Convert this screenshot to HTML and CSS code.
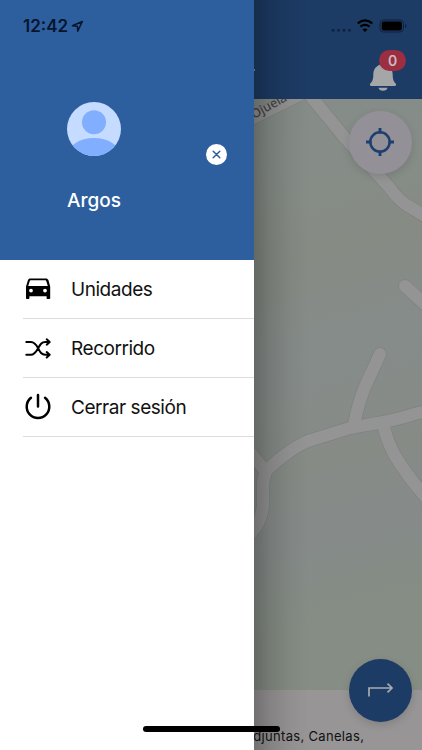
FILE: index.html
```html
<!DOCTYPE html>
<html lang="es">
<head>
<meta charset="utf-8">
<meta name="viewport" content="width=device-width, initial-scale=1">
<title>Argos</title>
<link rel="stylesheet" href="styles.css">
</head>
<body>
<div class="phone">
  <main class="app">
    <header class="topbar">
      <span class="title-end"></span>
      <div class="bell">
        <svg width="28" height="30" viewBox="0 0 28 30"><path d="M14 1.5c-1.5 0-2.3.8-2.3 2C7 4.8 4.300 8.500 4.300 13.500c0 6-1.500 7.500-3 9-.8.900-.4 2.500 1 2.500h23.400c1.400 0 1.800-1.600 1-2.500-1.500-1.500-3-3-3-9 0-5-2.700-8.700-7.400-10 0-1.200-.8-2-2.300-2zM9.500 26.700c.3 1.800 2 3 4.500 3s4.200-1.200 4.500-3z" fill="#a5a6a8"/></svg>
        <span class="badge">0</span>
      </div>
    </header>
    <section class="map">
      <svg class="roads" viewBox="254 99 168 591">
        <g class="road-edge">
          <path d="M245 122L301 94"/>
          <path d="M309 94L345 138L389 187Q400 202 410 207L430 219"/>
          <path d="M405 286L430 309"/>
          <path d="M380 354L369 378Q359 398 354 425"/>
          <path d="M430 411L418 413Q399 419 383 422L350 428L308 441Q289 449 266 471Q259 464 251 453M266 471Q263 479 263 486V506Q261 524 249 535"/>
          <path d="M383 423Q386 438 394 454Q406 475 430 502"/>
        </g>
        <g class="road">
          <path d="M245 122L301 94"/>
          <path d="M309 94L345 138L389 187Q400 202 410 207L430 219"/>
          <path d="M405 286L430 309"/>
          <path d="M380 354L369 378Q359 398 354 425"/>
          <path d="M430 411L418 413Q399 419 383 422L350 428L308 441Q289 449 266 471Q259 464 251 453M266 471Q263 479 263 486V506Q261 524 249 535"/>
          <path d="M383 423Q386 438 394 454Q406 475 430 502"/>
        </g>
        <text class="street" transform="translate(254 119) rotate(-29)">Ojuela</text>
      </svg>
      <button class="fab locate" aria-label="Ubicación">
        <svg width="30" height="30" viewBox="0 0 30 30" fill="none" stroke="#1d3f70"><circle cx="15" cy="15" r="9.700" stroke-width="2.500"/><path d="M15 1v5.500M15 23.500V29M1 15h5.500M23.500 15H29" stroke-width="2.900"/></svg>
      </button>
      <button class="fab route" aria-label="Ruta">
        <svg width="28" height="16" viewBox="0 0 28 16" fill="none" stroke="#a8acb2" stroke-width="1.700"><path d="M3 14.500V6h22.500M21.500 1.700L26 6l-4.500 4.300"/></svg>
      </button>
    </section>
    <footer class="address">Adjuntas, Canelas,</footer>
  </main>
  <div class="shade"></div>
  <aside class="drawer">
    <div class="profile">
      <svg class="avatar" width="54" height="54" viewBox="0 0 54 54"><defs><clipPath id="round"><circle cx="27" cy="27" r="27"/></clipPath></defs><g clip-path="url(#round)"><path fill="#c5dbff" d="M0 0h54v54H0z"/><circle cx="27" cy="20.300" r="12" fill="#82aeff"/><ellipse cx="27" cy="53" rx="26" ry="17" fill="#82aeff"/></g></svg>
      <h1>Argos</h1>
      <button class="close" aria-label="Cerrar"><svg width="21" height="21" viewBox="0 0 21 21"><path d="M7.200 7.200l6.600 6.600M13.800 7.200l-6.600 6.600" stroke="#2d5f9f" stroke-width="1.500" stroke-linecap="round"/></svg></button>
    </div>
    <nav>
      <a class="item"><svg width="30" height="30" viewBox="0 -0.5 30 30"><path fill-rule="evenodd" d="M7.200 4h15.600c1.300 0 2.100.5 2.600 1.600L27.200 12v11.400c0 .8-.4 1.100-1.100 1.100h-1.400c-.8 0-1.100-.4-1.100-1.100v-1.700H6.400v1.700c0 .7-.4 1.100-1.100 1.100H4.100c-.7 0-1.100-.3-1.100-1.100V12l2-6.400C5.500 4.500 6 4 7.200 4zm.8 1.800c-.7 0-1.100.2-1.300.9L5.200 11.500h19.600l-1.500-4.800c-.2-.7-.6-.9-1.300-.9zM8 14.200a1.900 1.900 0 1 0 0 3.800 1.900 1.900 0 0 0 0-3.800zm14 0a1.900 1.900 0 1 0 0 3.800 1.900 1.900 0 0 0 0-3.800z"/></svg><span>Unidades</span></a>
      <a class="item"><svg width="30" height="30" viewBox="0 -1 30 30" class="line"><path d="M3.300 8h4.500c3.500 0 5.200 2.200 7.200 6.100 2.200 4.100 3.600 6.700 7.300 6.700h4M3.300 20.800h4.500c3.500 0 5.200-2.700 7.200-6.300 2.200-4 3.600-6.500 7.300-6.500h4M23.700 5.300l3 2.700-3 2.700M23.700 18.100l3 2.700-3 2.700"/></svg><span>Recorrido</span></a>
      <a class="item"><svg width="30" height="30" viewBox="0 0 30 30" class="line power"><path d="M15 3v11.500M8 5.800a11.300 11.300 0 1 0 14 0"/></svg><span>Cerrar sesión</span></a>
    </nav>
  </aside>
  <div class="status">
    <span class="time">12:42</span>
    <svg class="arrow" width="13" height="13" viewBox="0 0 13 13"><path d="M11.300 1.500L1.400 5.800l5 .5.300 5z" fill="none" stroke="#07142d" stroke-width="1.500" stroke-linejoin="round"/></svg>
    <svg class="signals" width="82" height="18" viewBox="330 17 82 18">
      <g fill="#102340"><circle cx="333" cy="30.300" r="1.500"/><circle cx="338.500" cy="30.300" r="1.500"/><circle cx="344" cy="30.300" r="1.500"/><circle cx="349.500" cy="30.300" r="1.500"/></g>
      <path d="M357.700 23.300q7.300-5.700 14.600 0M360.400 26.600q4.600-3.500 9.200 0" fill="none" stroke="#000" stroke-width="2.200"/><path d="M362.500 29.400q2.500-1.800 5 0L365 32z"/>
      <rect x="380" y="20" width="23.500" height="12" rx="3.500" fill="none" stroke="#0f2140"/><rect x="381.700" y="21.600" width="20.200" height="8.800" rx="1.800"/><path d="M405 24v4q1.500-.5 1.500-2t-1.500-2z" fill="#0f2140"/>
    </svg>
  </div>
  <div class="home-bar"></div>
</div>
</body>
</html>
```
FILE: styles.css
```css
* { box-sizing: border-box; }
body { margin: 0; font-family: Inter, "Liberation Sans", sans-serif; }
button { border: 0; padding: 0; display: grid; place-items: center; }
svg { display: block; }
.phone { position: relative; width: 422px; height: 750px; overflow: hidden; background: #fff; }
.app { height: 750px; display: grid; grid-template-rows: 99px 591px 60px; }
.topbar { background: #1c3b65; display: flex; justify-content: flex-end; align-items: flex-start; padding: 61px 25px 0 0; }
.title-end { width: 2px; height: 2px; margin: 8px 114px 0 0; background: #8796aa; }
.bell { position: relative; }
.badge { position: absolute; left: 10px; top: -11px; width: 27px; height: 21px; border-radius: 11px; background: #9d2d40; color: #c9bcc2; font-size: 14px; font-weight: 600; line-height: 21px; text-align: center; }
.map { position: relative; background: linear-gradient(165deg, #858c88 0%, #868d88 20%, #868b84 34%, #868c8a 48%, #868b86 64%, #868b8a 74%, #858d84 86%); }
.roads { width: 168px; height: 591px; margin-left: 254px; }
.road-edge, .road { fill: none; stroke-linecap: round; stroke-linejoin: round; }
.road-edge { stroke: #7e8281; stroke-width: 13.6px; }
.road { stroke: #949494; stroke-width: 12.2px; }
.street { font: 500 12.5px "Noto Sans", sans-serif; fill: #454646; }
.fab { position: absolute; width: 63px; height: 63px; border-radius: 50%; }
.locate { top: 11.500px; right: 10.500px; background: #939197; box-shadow: 0 3px 9px rgba(0,0,0,.12); }
.route { bottom: -31.500px; right: 10.500px; background: #1c3b65; box-shadow: 0 3px 9px rgba(0,0,0,.14); padding-bottom: 1px; }
.address { background: #979596; padding: 37px 0 0 244px; font-size: 13px; line-height: 18px; letter-spacing: .32px; color: #111; white-space: nowrap; }
.shade { position: absolute; left: 254px; top: 0; width: 56px; height: 750px; background: linear-gradient(90deg, rgba(0,0,0,.25), rgba(0,0,0,.13) 28%, rgba(0,0,0,.04) 65%, transparent); }
.drawer { position: absolute; left: 0; top: 0; width: 254px; height: 750px; background: #fff; }
.profile { position: relative; height: 259.500px; background: #2d5f9f; padding: 102px 0 0 67px; }
.profile h1 { margin: 33px 0 0; font-size: 19px; font-weight: 500; line-height: 24px; color: #fff; }
.close { position: absolute; left: 206px; top: 144px; width: 21px; height: 21px; border-radius: 50%; background: #fff; }
.item { display: flex; align-items: center; gap: 18px; height: 59px; margin-left: 23px; border-bottom: 1px solid #dcdcdc; color: #111; font-size: 19px; letter-spacing: -.45px; }
.item span { padding-top: 2px; }
.item svg { fill: #000; }
.item .line { fill: none; stroke: #000; stroke-width: 2; stroke-linecap: round; stroke-linejoin: round; }
.item .power { stroke-width: 2.500; }
.status { position: absolute; left: 0; top: 17px; width: 422px; height: 18px; padding: 0 10px 0 23px; display: flex; align-items: center; }
.time { font-size: 17px; font-weight: 600; color: #07142d; line-height: 18px; }
.arrow { margin-left: 3px; }
.signals { margin-left: auto; }
.home-bar { position: absolute; left: 142.500px; top: 726px; width: 137px; height: 6px; border-radius: 3px; background: #000; }
```
